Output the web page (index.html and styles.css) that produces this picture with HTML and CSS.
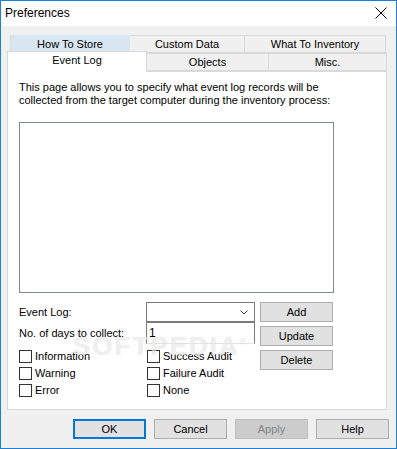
FILE: index.html
```html
<!DOCTYPE html>
<html>
  <head>
    <meta charset="UTF-8">
    <title>Preferences</title>

    <link rel="stylesheet" href="styles.css">
  </head>
  <body>

    <div class='window'>
      <div class='titlebar'>
        <span class='title'>Preferences</span>
        <svg class='close' width='12' height='12' viewBox='0 0 12 12'>
          <path d='M0.5 0.5 L11.5 11.5 M11.5 0.5 L0.5 11.5' stroke='#000' stroke-width='1' fill='none'/>
        </svg>
      </div>

      <div class='dialog'>
        <div class='tabs'>
          <div class='tab-row back'>
            <div class='tab hot w-store'>How To Store</div>
            <div class='tab w-custom'>Custom Data</div>
            <div class='tab w-inventory'>What To Inventory</div>
          </div>
          <div class='tab-row front'>
            <div class='tab selected w-event'>Event Log</div>
            <div class='tab w-objects'>Objects</div>
            <div class='tab w-misc'>Misc.</div>
          </div>
        </div>

        <div class='panel'>
          <p class='intro'>This page allows you to specify what event log records will be collected from the target computer during the inventory process:</p>
          <div class='listbox'></div>

          <div class='controls'>
            <div class='fields'>
              <div class='field-row'>
                <span class='label'>Event Log:</span>
                <div class='combo'>
                  <svg width='8' height='5' viewBox='0 0 8 5'>
                    <path d='M0.5 0.5 L4 4 L7.5 0.5' stroke='#333' stroke-width='1' fill='none'/>
                  </svg>
                </div>
              </div>
              <div class='field-row'>
                <span class='label'>No. of days to collect:</span>
                <div class='edit'>1</div>
              </div>
              <div class='checks'>
                <label class='check'><span class='box'></span>Information</label>
                <label class='check'><span class='box'></span>Success Audit</label>
                <label class='check'><span class='box'></span>Warning</label>
                <label class='check'><span class='box'></span>Failure Audit</label>
                <label class='check'><span class='box'></span>Error</label>
                <label class='check'><span class='box'></span>None</label>
              </div>
            </div>
            <div class='side-buttons'>
              <button class='btn'>Add</button>
              <button class='btn'>Update</button>
              <button class='btn'>Delete</button>
            </div>
          </div>

          <div class='watermark'>SOFTPEDIA<sup>®</sup></div>
        </div>

        <div class='footer'>
          <button class='btn default'>OK</button>
          <button class='btn'>Cancel</button>
          <button class='btn' disabled>Apply</button>
          <button class='btn'>Help</button>
        </div>
      </div>
    </div>

  </body>
</html>
```

FILE: styles.css
```css
html, body {
  margin: 0;
  padding: 0;
  width: 100%;
  height: 100%;
}

body {
  font-family: "Liberation Sans", Arial, sans-serif;
  font-size: 11px;
  color: #000;
  background: #f0f0f0;
}

.window {
  box-sizing: border-box;
  width: 397px;
  height: 449px;
  border: 1px solid #1b80d8;
  background: #f0f0f0;
  display: flex;
  flex-direction: column;
}

.titlebar {
  height: 25px;
  background: #fff;
  display: flex;
  align-items: center;
  justify-content: space-between;
  padding: 0 9px 0 4px;
}

.title {
  font-size: 12px;
  margin-top: -2px;
}

.close {
  margin-top: -2px;
}

.dialog {
  flex: 1;
  padding-top: 9px;
  display: flex;
  flex-direction: column;
}

/* tabs */

.tabs {
  margin-left: 6px;
}

.tab-row {
  display: flex;
  height: 18px;
}

.tab-row.back {
  padding-left: 3px;
}

.tab-row.front {
  align-items: flex-end;
}

.tab {
  box-sizing: border-box;
  height: 18px;
  border: 1px solid #d9d9d9;
  border-left: none;
  background: #f0f0f0;
  text-align: center;
  line-height: 16px;
}

.tab-row .tab:first-child {
  border-left: 1px solid #d9d9d9;
}

.tab.hot {
  background: #d8e6f2;
  border-color: #d8e6f2;
}

.tab.selected {
  position: relative;
  z-index: 1;
  height: 21px;
  margin-bottom: -1px;
  background: #fff;
  border-bottom: none;
  line-height: 17px;
}

.w-store { width: 120px; }
.w-custom { width: 115px; }
.w-inventory { width: 141px; }
.w-event { width: 140px; }
.w-objects { width: 122px; }
.w-misc { width: 118px; }

/* page */

.panel {
  position: relative;
  box-sizing: border-box;
  margin-left: 6px;
  width: 380px;
  height: 339px;
  border: 1px solid #d9d9d9;
  background: #fff;
  padding: 9px 11px 0 11px;
}

.intro {
  margin: 0;
  line-height: 13px;
  width: 330px;
}

.listbox {
  box-sizing: border-box;
  margin-top: 15px;
  width: 315px;
  height: 171px;
  border: 1px solid #828790;
  background: #fff;
}

.controls {
  display: flex;
  margin-top: 9px;
  gap: 5px;
}

.field-row {
  display: flex;
  align-items: center;
}

.label {
  width: 127px;
}

.combo {
  box-sizing: border-box;
  width: 109px;
  height: 20px;
  border: 1px solid #7a7a7a;
  display: flex;
  align-items: center;
  justify-content: flex-end;
  padding-right: 6px;
}

.edit {
  box-sizing: border-box;
  width: 109px;
  height: 22px;
  border: 1px solid #7a7a7a;
  border-bottom-color: #e3e3e3;
  padding: 3px 0 0 2px;
  font-size: 12px;
}

.checks {
  display: grid;
  grid-template-columns: 128px 100px;
  grid-auto-rows: 17px;
  margin-top: 6px;
}

.check {
  display: flex;
  align-items: flex-start;
}

.box {
  box-sizing: border-box;
  width: 13px;
  height: 13px;
  border: 1px solid #333;
  background: #fff;
  margin-right: 3px;
}

.side-buttons {
  display: flex;
  flex-direction: column;
  gap: 4px;
}

.watermark {
  position: absolute;
  left: 65px;
  top: 257px;
  font-size: 26px;
  font-weight: bold;
  line-height: 26px;
  letter-spacing: 2px;
  color: rgba(255, 255, 255, 0.6);
  text-shadow: 0 0 1px rgba(0, 0, 0, 0.16);
  pointer-events: none;
}

.watermark sup {
  font-size: 9px;
  font-weight: normal;
  vertical-align: 10px;
}

/* buttons */

.btn {
  box-sizing: border-box;
  width: 73px;
  height: 20px;
  margin: 0;
  padding: 0;
  border: 1px solid #adadad;
  background: #e1e1e1;
  font-family: "Liberation Sans", Arial, sans-serif;
  font-size: 11px;
  color: #000;
}

.btn.default {
  border: 2px solid #0078d7;
}

.btn:disabled {
  background: #cccccc;
  border-color: #bfbfbf;
  color: #838383;
}

.footer {
  display: flex;
  justify-content: flex-end;
  gap: 8px;
  padding: 9px 7px 0 0;
}

.footer .btn {
  width: 73px;
}
```
